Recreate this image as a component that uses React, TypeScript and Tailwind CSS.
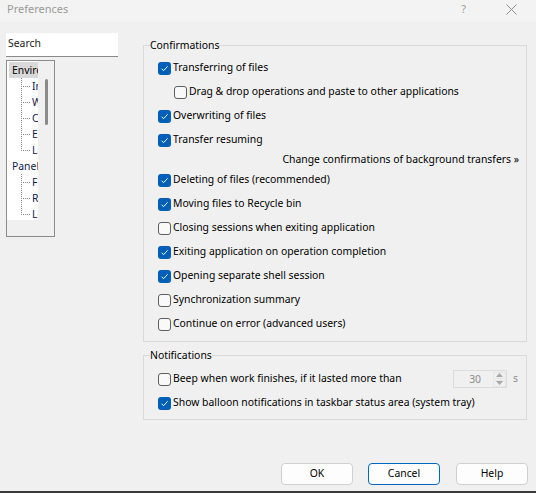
import React from "react";

const FONT = "font-['Noto_Sans','Open_Sans',sans-serif]";

function CheckBox({ checked }: { checked: boolean }) {
  if (checked) {
    return (
      <span className="w-[13px] h-[13px] rounded-[3px] bg-[#005fb8] flex items-center justify-center shrink-0">
        <svg width="9" height="9" viewBox="0 0 9 9">
          <path d="M1.6 4.7 L3.6 6.7 L7.6 2.3" fill="none" stroke="#ffffff" strokeWidth="1" />
        </svg>
      </span>
    );
  }
  return <span className="w-[13px] h-[13px] rounded-[3px] border border-[#5e5e5e] bg-[#f9f9f9] shrink-0" />;
}

function Option({ label, checked, indent = false }: { label: string; checked: boolean; indent?: boolean }) {
  return (
    <div className={`h-[24px] flex items-center ${indent ? "pl-[30px]" : "pl-[14px]"}`}>
      <CheckBox checked={checked} />
      <span className="ml-[2px] whitespace-nowrap">{label}</span>
    </div>
  );
}

function TreeBranch({ last }: { last: boolean }) {
  return (
    <svg width="25" height="16" viewBox="0 0 25 16" className="shrink-0">
      <line x1="14.5" y1="0" x2="14.5" y2={last ? 9 : 16} stroke="#8a8a8a" strokeDasharray="1 1" />
      <line x1="16" y1="8.5" x2="24" y2="8.5" stroke="#8a8a8a" strokeDasharray="1 1" />
    </svg>
  );
}

function TreeChild({ label, last = false }: { label: string; last?: boolean }) {
  return (
    <div className="h-[16px] flex items-center whitespace-nowrap text-[#0d1a4f]">
      <TreeBranch last={last} />
      <span className="leading-[16px]">{label}</span>
    </div>
  );
}

function DialogButton({ label, focused = false }: { label: string; focused?: boolean }) {
  return (
    <button
      className={`w-[72px] h-[22px] rounded-[4px] bg-[#fdfdfd] text-[10.4px] text-black border ${
        focused ? "border-[#0067c0]" : "border-[#d0d0d0]"
      }`}
    >
      {label}
    </button>
  );
}

export default function App() {
  return (
    <div className={`w-[536px] h-[493px] bg-[#f0f0f0] flex flex-col overflow-hidden text-[10.4px] text-black ${FONT}`}>
      {/* title bar */}
      <div className="h-[22px] flex items-start pt-[2px] bg-[#f3f3f3]">
        <span className="ml-[7px] leading-[14px] text-[#9b9b9b] text-[11px]">Preferences</span>
        <span className="ml-auto mr-[40px] leading-[14px] text-[#9b9b9b] text-[11px]">?</span>
        <svg width="11" height="11" viewBox="0 0 11 11" className="mr-[19px] mt-[2px]">
          <path d="M0.5 0.5 L10.5 10.5 M10.5 0.5 L0.5 10.5" stroke="#8f8f8f" strokeWidth="1" />
        </svg>
      </div>

      <div className="flex pt-[11px] pl-[6px]">
        {/* navigation column */}
        <div className="w-[112px] flex flex-col">
          <div className="h-[24px] bg-white border-b border-[#8a8a8a] flex items-center pl-[2px] pb-[2px] text-[#222]">
            Search
          </div>
          <div className="mt-[3px] w-[49px] h-[177px] border border-[#8c8c8c] flex">
            <div className="w-[31px] h-[159px] bg-white overflow-hidden pt-[1px]">
              <div className="h-[16px] ml-[2px] pl-[3px] bg-[#d9d9d9] leading-[16px] whitespace-nowrap">Environment</div>
              <TreeChild label="Interface" />
              <TreeChild label="Window" />
              <TreeChild label="Commander" />
              <TreeChild label="Explorer" />
              <TreeChild label="Languages" last />
              <div className="h-[16px] pl-[5px] leading-[16px] whitespace-nowrap text-[#0d1a4f]">Panels</div>
              <TreeChild label="File colors" />
              <TreeChild label="Remote" />
              <TreeChild label="Local" last />
            </div>
            <div className="w-[16px] pl-[7px] pt-[18px]">
              <div className="w-[3px] h-[46px] rounded-full bg-[#8a8a8a]" />
            </div>
          </div>
        </div>

        {/* settings column */}
        <div className="ml-[25px] mt-[4px] w-[384px] flex flex-col">
          <fieldset className="w-full border border-[#d9d9d9] px-0 pt-[3px] pb-[5px] m-0">
            <legend className="ml-[6px] p-0 leading-[16px]">Confirmations</legend>
            <Option label="Transferring of files" checked />
            <Option label="Drag & drop operations and paste to other applications" checked={false} indent />
            <Option label="Overwriting of files" checked />
            <Option label="Transfer resuming" checked />
            <div className="h-[16px] flex items-center justify-end pr-[7px] whitespace-nowrap">
              Change confirmations of background transfers »
            </div>
            <Option label="Deleting of files (recommended)" checked />
            <Option label="Moving files to Recycle bin" checked />
            <Option label="Closing sessions when exiting application" checked={false} />
            <Option label="Exiting application on operation completion" checked />
            <Option label="Opening separate shell session" checked />
            <Option label="Synchronization summary" checked={false} />
            <Option label="Continue on error (advanced users)" checked={false} />
          </fieldset>

          <fieldset className="w-full mt-[5px] border border-[#d9d9d9] px-0 pt-[4px] pb-[4px] m-0">
            <legend className="ml-[6px] p-0 leading-[16px]">Notifications</legend>
            <div className="h-[24px] flex items-center pl-[14px] pr-[8px]">
              <CheckBox checked={false} />
              <span className="ml-[2px] whitespace-nowrap">Beep when work finishes, if it lasted more than</span>
              <div className="ml-auto flex items-center">
                <div className="w-[54px] h-[18px] border border-[#dcdcdc] flex items-center">
                  <span className="flex-1 text-right pr-[12px] text-[#8c8c8c] leading-[16px]">30</span>
                  <div className="w-[13px] flex flex-col gap-[1px]">
                    <div className="h-[7px] border border-[#e6e6e6] flex items-center justify-center">
                      <svg width="7" height="4" viewBox="0 0 7 4">
                        <path d="M0 4 L3.5 0 L7 4 Z" fill="#a8a8a8" />
                      </svg>
                    </div>
                    <div className="h-[7px] border border-[#e6e6e6] flex items-center justify-center">
                      <svg width="7" height="4" viewBox="0 0 7 4">
                        <path d="M0 0 L3.5 4 L7 0 Z" fill="#a8a8a8" />
                      </svg>
                    </div>
                  </div>
                </div>
                <span className="ml-[6px] text-[#8c8c8c]">s</span>
              </div>
            </div>
            <Option label="Show balloon notifications in taskbar status area (system tray)" checked />
          </fieldset>
        </div>
      </div>

      <div className="flex-1" />
      <div className="flex justify-end gap-[15px] pr-[8px] mb-[6px]">
        <DialogButton label="OK" />
        <DialogButton label="Cancel" focused />
        <div className="ml-[1px]">
          <DialogButton label="Help" />
        </div>
      </div>
      <div className="h-[2px] bg-[#3a3a3a]" />
    </div>
  );
}
